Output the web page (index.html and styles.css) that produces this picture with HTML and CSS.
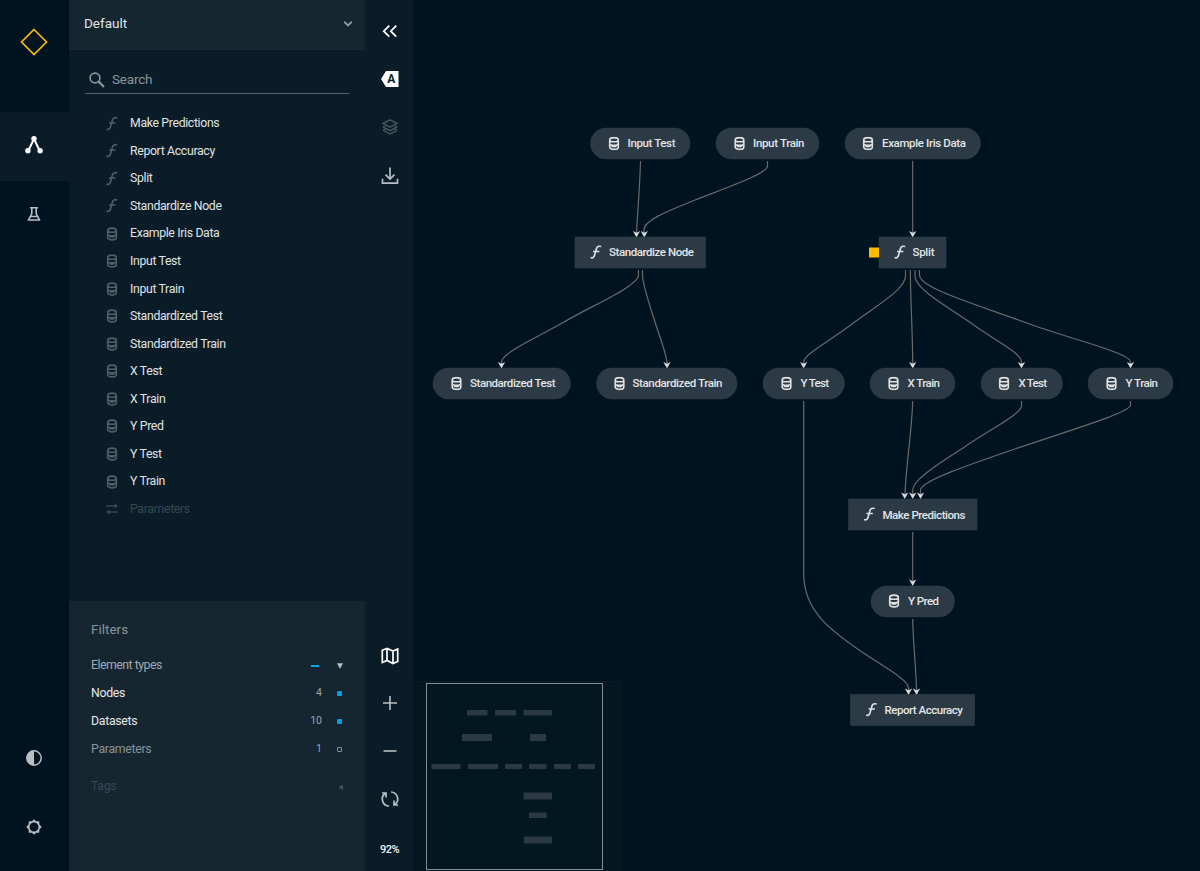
FILE: index.html
```html
<!DOCTYPE html>
<html lang="en">
<head>
<meta charset="utf-8">
<title>Pipeline</title>
<link rel="stylesheet" href="styles.css">
</head>
<body>
<svg class="defs" width="0" height="0" aria-hidden="true">
  <symbol id="fn" viewBox="0 0 14 16"><path d="M1.200 14C3.800 15 4.900 13.500 5.500 11.200L7.500 4.300C8.100 2.100 9.800 1.200 12.600 2.100M3.800 7.500H10.700" fill="none" stroke="currentColor" stroke-width="1.750"/></symbol>
  <symbol id="db" viewBox="0 0 12 14"><path d="M1.700 3.500C1.700 .3 10.300 .3 10.300 3.500V10.500C10.300 13.700 1.700 13.700 1.700 10.500ZM1.700 3.500C1.700 5.900 10.300 5.900 10.300 3.500M1.700 7C1.700 9.400 10.300 9.400 10.300 7M3.500 9.300C4.700 10.200 7.300 10.200 8.500 9.300" fill="none" stroke="currentColor" stroke-width="1.600"/></symbol>
  <symbol id="params" viewBox="0 0 14 12"><path d="M1 3H12M2 9H13" fill="none" stroke="currentColor" stroke-width="1.300"/><path d="M9.500 .6L13 3L9.500 5.400ZM4.500 6.600L1 9L4.500 11.400Z" fill="currentColor"/></symbol>
  <symbol id="arrow" viewBox="0 0 8 8"><path d="M.4 1L4 7.400L7.600 1L4 2.800Z" fill="#d8dcdf"/></symbol>
</svg>
<div class="app">
  <nav class="rail">
    <div class="logo"><svg width="28" height="28" viewBox="0 0 28 28"><path d="M14 1.500L26.500 14L14 26.500L1.500 14Z" fill="none" stroke="#fdb900" stroke-width="1.700"/></svg></div>
    <div class="rail-item active"><svg width="20" height="20" viewBox="0 0 20 20"><path d="M4.200 16L10 3.800L15.800 16" fill="none" stroke="#fff" stroke-width="2"/><circle cx="10" cy="3.700" r="2.700" fill="#fff"/><circle cx="3.900" cy="15.800" r="2.700" fill="#fff"/><circle cx="16.100" cy="15.800" r="2.700" fill="#fff"/></svg></div>
    <div class="rail-item"><svg width="16" height="16" viewBox="0 0 16 16"><path d="M4 1.800H12M5.800 2V7.500L2.600 14H13.400L10.200 7.500V2M4.500 10.500H11.500" fill="none" stroke="#b8bfc3" stroke-width="1.600"/></svg></div>
    <div class="rail-bottom">
      <div class="rail-item"><svg width="18" height="18" viewBox="0 0 18 18"><circle cx="9" cy="9" r="7.200" fill="none" stroke="#b8bfc3" stroke-width="1.500"/><path d="M9 1.500A7.500 7.500 0 0 0 9 16.500Z" fill="#b8bfc3"/></svg></div>
      <div class="rail-item"><svg width="18" height="18" viewBox="0 0 18 18"><path fill="#b8bfc3" fill-rule="evenodd" d="M9 1.200L11 3.300L14.200 3.300L14.400 6.600L16.700 9L14.400 11.400L14.200 14.700L11 14.700L9 16.800L7 14.700L3.800 14.700L3.600 11.400L1.300 9L3.600 6.600L3.800 3.300L7 3.300ZM9 4.500A4.500 4.500 0 1 0 9 13.500A4.500 4.500 0 1 0 9 4.500Z"/></svg></div>
    </div>
  </nav>
  <aside class="panel">
    <header class="pipeline"><span>Default</span><svg width="10" height="8" viewBox="0 0 10 8"><path d="M1.200 1.800L5 5.400L8.800 1.800" fill="none" stroke="#8f989e" stroke-width="1.900"/></svg></header>
    <div class="search"><svg width="18" height="18" viewBox="0 0 18 18"><circle cx="7" cy="7" r="4.900" fill="none" stroke="#8b9499" stroke-width="1.700"/><path d="M10.600 10.600L16 16" stroke="#8b9499" stroke-width="2.200"/></svg><span>Search</span></div>
    <ul class="nodes">
      <li><svg class="fn"><use href="#fn"/></svg><span>Make Predictions</span></li>
      <li><svg class="fn"><use href="#fn"/></svg><span>Report Accuracy</span></li>
      <li><svg class="fn"><use href="#fn"/></svg><span>Split</span></li>
      <li><svg class="fn"><use href="#fn"/></svg><span>Standardize Node</span></li>
      <li><svg class="db"><use href="#db"/></svg><span>Example Iris Data</span></li>
      <li><svg class="db"><use href="#db"/></svg><span>Input Test</span></li>
      <li><svg class="db"><use href="#db"/></svg><span>Input Train</span></li>
      <li><svg class="db"><use href="#db"/></svg><span>Standardized Test</span></li>
      <li><svg class="db"><use href="#db"/></svg><span>Standardized Train</span></li>
      <li><svg class="db"><use href="#db"/></svg><span>X Test</span></li>
      <li><svg class="db"><use href="#db"/></svg><span>X Train</span></li>
      <li><svg class="db"><use href="#db"/></svg><span>Y Pred</span></li>
      <li><svg class="db"><use href="#db"/></svg><span>Y Test</span></li>
      <li><svg class="db"><use href="#db"/></svg><span>Y Train</span></li>
      <li class="off"><svg class="params"><use href="#params"/></svg><span>Parameters</span></li>
    </ul>
    <section class="filters">
      <h2>Filters</h2>
      <div class="filter group"><span class="name">Element types</span><i class="dash"></i><svg class="mark" viewBox="0 0 8 8"><path d="M1 1.200H7L4 6.900Z" fill="#b5bbbf"/></svg></div>
      <div class="filter on"><span class="name">Nodes</span><span class="count">4</span><i class="mark dot"></i></div>
      <div class="filter on"><span class="name">Datasets</span><span class="count">10</span><i class="mark dot"></i></div>
      <div class="filter"><span class="name">Parameters</span><span class="count">1</span><i class="mark ring"></i></div>
      <div class="filter tags"><span class="name">Tags</span><svg class="mark" viewBox="0 0 8 8"><path d="M7 1.700V6.800L2.300 4.250Z" fill="#46525b"/></svg></div>
    </section>
  </aside>
  <div class="tools">
    <div class="tool"><svg width="20" height="20" viewBox="0 0 20 20"><path d="M9.300 4.700L3.800 10.200L9.300 15.700M16.300 4.700L10.800 10.200L16.300 15.700" fill="none" stroke="#fff" stroke-width="1.800"/></svg></div>
    <div class="tool"><svg width="20" height="20" viewBox="0 0 20 20"><path d="M1 10L6 2H18.500V18H6Z" fill="#fff"/><text x="11.400" y="14.300" class="tag-letter">A</text></svg></div>
    <div class="tool"><svg width="20" height="20" viewBox="0 0 20 20"><path d="M3 6.500L10 2.800L17 6.500L10 10.200ZM3 10L10 13.700L17 10M3 13.300L10 17L17 13.300M3 10L5.500 8.500M17 10L14.500 8.500M3 13.300L5.500 12M17 13.300L14.500 12" fill="none" stroke="#46545d" stroke-width="1.500"/></svg></div>
    <div class="tool"><svg width="20" height="20" viewBox="0 0 20 20"><path d="M10 1.500V12.500M5.500 8.600L10 13L14.500 8.600M2.500 12.700V17.200H17.500V12.700" fill="none" stroke="#b8bfc3" stroke-width="1.700"/></svg></div>
    <div class="tools-bottom">
      <div class="tool map"><svg width="20" height="20" viewBox="0 0 20 20"><path d="M2.300 4.200L7 2.400L13 5L17.700 3V15.500L13 17.600L7 14.500L2.300 16.500ZM7 2.400V14.500M13 5V17.600" fill="none" stroke="#fff" stroke-width="1.700"/></svg></div>
      <div class="tool"><svg width="20" height="20" viewBox="0 0 20 20"><path d="M3 10H17M10 3V17" stroke="#b8bfc3" stroke-width="1.600"/></svg></div>
      <div class="tool"><svg width="20" height="20" viewBox="0 0 20 20"><path d="M3.500 10H16.500" stroke="#b8bfc3" stroke-width="1.600"/></svg></div>
      <div class="tool"><svg width="20" height="20" viewBox="0 0 20 20"><path d="M9 17A7 7 0 0 1 5 4.500M11 3A7 7 0 0 1 15 15.500M2 4H6V8.500M18 16H14V11.500" fill="none" stroke="#b8bfc3" stroke-width="1.700"/></svg></div>
      <div class="tool zoom">92%</div>
    </div>
  </div>
  <main class="canvas">
    <svg class="graph" width="787" height="871" viewBox="413 0 787 871">
      <g class="edges">
        <path d="M640.500 161C640 185 637.500 212 636.500 233"/>
        <path d="M767.500 161V166C767.500 174 720 190 695 200C668 211 644 220 644 230V233"/>
        <path d="M912.700 161V233"/>
        <path d="M638.500 270V275C638.500 286 593 305 564 322C536 338 501.500 353 501.500 362V364"/>
        <path d="M642.500 270V276C643 286 650 306 656 325C661 341 667 355 667 364"/>
        <path d="M905.500 270V276C905.500 290 874 307 848 327C826 343 803.700 355 803.700 362V364"/>
        <path d="M910.300 270C910.500 300 912.700 335 912.700 364"/>
        <path d="M915 270V276C915 290 952 309 978 328C1000 343 1021.500 354 1021.500 362V364"/>
        <path d="M919.500 270V275C919.500 288 975 304 1024 322C1070 339 1130.500 353 1130.500 362V364"/>
        <path d="M912.700 401C912 430 906 465 905 494"/>
        <path d="M1021.500 401V406C1021.500 414 987 431 963 448C937 465 912.700 480 912.700 490V494"/>
        <path d="M1130.500 401V405C1130.500 413 1058 434 1012 450C974 463 920.500 481 920.500 490V494"/>
        <path d="M912.700 532V581"/>
        <path d="M803.700 401V574C803.700 612 833 632 862 652C886 668 908.500 680 908.500 688V690"/>
        <path d="M912.700 619C913 645 916 665 916.500 690"/>
      </g>
      <g>
        <use href="#arrow" x="632.500" y="230" width="8" height="8"/><use href="#arrow" x="640.300" y="230" width="8" height="8"/><use href="#arrow" x="908.700" y="230" width="8" height="8"/>
        <use href="#arrow" x="497.500" y="361" width="8" height="8"/><use href="#arrow" x="663" y="361" width="8" height="8"/><use href="#arrow" x="799.700" y="361" width="8" height="8"/><use href="#arrow" x="908.700" y="361" width="8" height="8"/><use href="#arrow" x="1017.500" y="361" width="8" height="8"/><use href="#arrow" x="1126.500" y="361" width="8" height="8"/>
        <use href="#arrow" x="900.700" y="491.500" width="8" height="8"/><use href="#arrow" x="908.700" y="491.500" width="8" height="8"/><use href="#arrow" x="916.500" y="491.500" width="8" height="8"/>
        <use href="#arrow" x="908.700" y="578.500" width="8" height="8"/><use href="#arrow" x="904.500" y="687.500" width="8" height="8"/><use href="#arrow" x="912.500" y="687.500" width="8" height="8"/>
      </g>
      <g class="node">
        <rect x="590.500" y="128" width="99.500" height="31" rx="15.500"/><use href="#db" x="608" y="136.500" width="12" height="14"/><text x="627.500" y="147" textLength="48">Input Test</text>
        <rect x="716" y="128" width="103" height="31" rx="15.500"/><use href="#db" x="733.500" y="136.500" width="12" height="14"/><text x="753" y="147" textLength="51.500">Input Train</text>
        <rect x="845" y="128" width="135.500" height="31" rx="15.500"/><use href="#db" x="862" y="136.500" width="12" height="14"/><text x="882" y="147" textLength="84">Example Iris Data</text>
        <rect x="575" y="237" width="130.500" height="31"/><use href="#fn" x="589.500" y="244.500" width="13" height="15"/><text x="609" y="256" textLength="85">Standardize Node</text>
        <rect x="879" y="237" width="67" height="31"/><use href="#fn" x="893.500" y="244.500" width="13" height="15"/><text x="912.500" y="256" textLength="22">Split</text>
        <rect x="433" y="368" width="137.500" height="31" rx="15.500"/><use href="#db" x="450.500" y="376.500" width="12" height="14"/><text x="470" y="387" textLength="85.500">Standardized Test</text>
        <rect x="596.500" y="368" width="140.500" height="31" rx="15.500"/><use href="#db" x="613.500" y="376.500" width="12" height="14"/><text x="632.500" y="387" textLength="90">Standardized Train</text>
        <rect x="763" y="368" width="81.500" height="31" rx="15.500"/><use href="#db" x="780.500" y="376.500" width="12" height="14"/><text x="800.500" y="387" textLength="28.500">Y Test</text>
        <rect x="870" y="368" width="85" height="31" rx="15.500"/><use href="#db" x="887.500" y="376.500" width="12" height="14"/><text x="907.500" y="387" textLength="32.500">X Train</text>
        <rect x="981" y="368" width="81.500" height="31" rx="15.500"/><use href="#db" x="998" y="376.500" width="12" height="14"/><text x="1018.500" y="387" textLength="28.500">X Test</text>
        <rect x="1088" y="368" width="85" height="31" rx="15.500"/><use href="#db" x="1105.500" y="376.500" width="12" height="14"/><text x="1125.500" y="387" textLength="32.500">Y Train</text>
        <rect x="848.500" y="499" width="128.500" height="31"/><use href="#fn" x="863" y="506.500" width="13" height="15"/><text x="882.500" y="518.500" textLength="83">Make Predictions</text>
        <rect x="871" y="586" width="83.500" height="31" rx="15.500"/><use href="#db" x="888" y="594" width="12" height="14"/><text x="908" y="605" textLength="31">Y Pred</text>
        <rect x="850.500" y="694.500" width="124" height="31"/><use href="#fn" x="865" y="702" width="13" height="15"/><text x="884.500" y="714" textLength="78.500">Report Accuracy</text>
      </g>
      <rect x="869" y="247.500" width="10" height="10" fill="#ffbc00"/>
    </svg>
    <svg class="minimap" width="208" height="190" viewBox="413 681 208 190">
      <path d="M413 681.500H620.500V871" fill="none" stroke="#091c27"/>
      <rect x="426.500" y="683.500" width="176" height="186" fill="none" stroke="#858c90"/>
      <path fill="#2a3943" d="M467 710h20.500v5.500h-20.500zM495 710h21v5.500h-21zM523.500 710h28.500v5.500h-28.500zM462 734h30v7h-30zM530 734h16v7h-16zM431.500 764h29v5h-29zM468 764h30v5h-30zM505 764h17v5h-17zM529 764h17.500v5h-17.500zM554 764h17v5h-17zM578 764h17v5h-17zM523.500 792.500h28.500v7h-28.500zM529 812.500h17.500v5.500h-17.500zM524 836.500h28v7h-28z"/>
    </svg>
  </main>
</div>
</body>
</html>
```
FILE: styles.css
```css
* { box-sizing: border-box; }
body { margin: 0; background: #001320; color: #e0e3e5; font: 12.3px/1 "Roboto", "Open Sans", sans-serif; overflow: hidden; }
.defs { display: none; }
svg { display: block; }
.app { display: flex; width: 1200px; height: 871px; }

.rail { width: 69px; display: flex; flex-direction: column; background: #001320; }
.logo { height: 112px; padding: 28px 1px 0 0; display: flex; justify-content: center; }
.rail-item { height: 69px; padding: 0 1px 3px 0; display: flex; align-items: center; justify-content: center; }
.rail-item.active { background: #091c27; }
.rail-bottom { margin-top: auto; padding-bottom: 8px; }

.panel { width: 296px; display: flex; flex-direction: column; background: #091c27; }
.pipeline { height: 50px; padding: 0 12px 2px 15px; display: flex; align-items: center; justify-content: space-between; background: #152631; border-bottom: 1px solid #1b2c37; font-size: 13.5px; }
.pipeline span { padding-top: 1px; }
.search { height: 28px; margin: 16px 16px 0; padding-left: 3px; display: flex; align-items: center; gap: 6px; border-bottom: 1px solid #54626b; color: #8b9499; font-size: 13.5px; letter-spacing: -.2px; }
.nodes { list-style: none; margin: 0; padding: 15.500px 0 0 36px; }
.nodes li { height: 27.570px; display: flex; align-items: center; gap: 11px; letter-spacing: -.35px; }
.nodes svg { width: 14px; color: #515e66; }
.nodes .fn { height: 15px; }
.nodes .db { height: 14px; }
.nodes .params { height: 12px; }
.nodes .off { color: #394851; }
.nodes .off svg { color: #394851; }

.filters { height: 270px; margin-top: auto; padding: 20px 21px 0 22px; background: #152631; color: #89939a; }
.filters h2 { margin: 0; height: 16px; font-size: 13.5px; line-height: 16px; font-weight: 400; letter-spacing: 0; }
.filter { height: 28px; display: flex; align-items: center; letter-spacing: -.3px; }
.filter.group { margin-top: 14.500px; color: #a1a9ae; letter-spacing: -.5px; }
.filter.on { color: #e6e8ea; }
.filter.tags { margin-top: 9px; color: #394851; }
.name { flex: 1; }
.count { font-size: 10.5px; color: #9ba4aa; margin-right: 13px; letter-spacing: 0; }
.mark { width: 8px; height: 8px; }
.dash { width: 8px; height: 2px; margin-right: 17px; background: #00a6e4; }
.dot { width: 5px; height: 5px; margin: 0 2px; background: #00a0dc; border-radius: 1px; }
.ring { width: 5px; height: 5px; margin: 0 2px; border: 1px solid #89939a; border-radius: 1px; }

.tools { width: 48px; display: flex; flex-direction: column; padding: 7px 0 0 1px; background: #091c27; }
.tool { height: 48.200px; display: flex; align-items: center; justify-content: center; }
.tools-bottom { margin-top: auto; }
.tools-bottom .tool { height: 48px; }
.tools-bottom .map { padding-top: 2px; }
.tools-bottom .zoom { height: 48.500px; padding-top: 5px; font-size: 11px; font-weight: 500; letter-spacing: -.6px; color: #f3f4f5; }
.tag-letter { font: 700 12px "Roboto", sans-serif; text-anchor: middle; fill: #091c27; }

.canvas { flex: 1; position: relative; }
.edges path { fill: none; stroke: #696a6b; stroke-width: 1.200; }
.node rect { fill: #2b3a44; stroke: #33424c; stroke-width: .5; }
.node use { color: #dfe2e4; }
.node text { font: 500 11.500px "Roboto", sans-serif; fill: #e3e5e7; }
.minimap { position: absolute; left: 0; bottom: 0; background: #031721; }
```
